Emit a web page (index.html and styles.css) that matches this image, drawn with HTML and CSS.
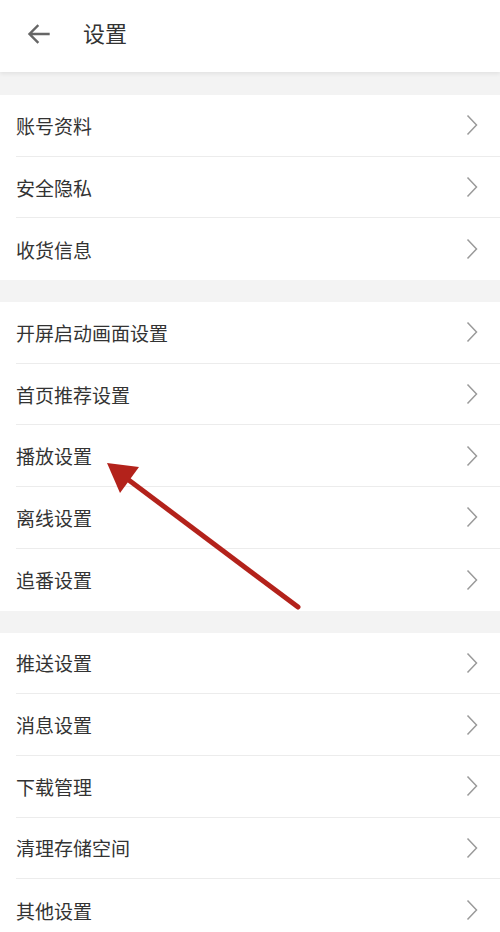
FILE: index.html
```html
<!DOCTYPE html>
<html lang="zh-CN">
<head>
<meta charset="utf-8">
<title>设置</title>
<link rel="stylesheet" href="styles.css">
</head>
<body>
<div class="page">
  <header class="topbar">
    <svg class="back" viewBox="0 0 24 24" width="24" height="24"><path d="M22.5 12H4M11.5 4L3.5 12 11.5 20" fill="none" stroke="#666" stroke-width="2.4" stroke-linecap="square"/></svg>
    <h1 class="title">设置</h1>
  </header>

  <ul class="group first">
    <li class="row"><span>账号资料</span><svg class="chev" viewBox="0 0 12 22" width="12" height="22"><path d="M1.5 1.5L10.5 11 1.5 20.5" fill="none" stroke="#9a9a9a" stroke-width="1.5"/></svg></li>
    <li class="row"><span>安全隐私</span><svg class="chev" viewBox="0 0 12 22" width="12" height="22"><path d="M1.5 1.5L10.5 11 1.5 20.5" fill="none" stroke="#9a9a9a" stroke-width="1.5"/></svg></li>
    <li class="row"><span>收货信息</span><svg class="chev" viewBox="0 0 12 22" width="12" height="22"><path d="M1.5 1.5L10.5 11 1.5 20.5" fill="none" stroke="#9a9a9a" stroke-width="1.5"/></svg></li>
  </ul>

  <ul class="group">
    <li class="row"><span>开屏启动画面设置</span><svg class="chev" viewBox="0 0 12 22" width="12" height="22"><path d="M1.5 1.5L10.5 11 1.5 20.5" fill="none" stroke="#9a9a9a" stroke-width="1.5"/></svg></li>
    <li class="row"><span>首页推荐设置</span><svg class="chev" viewBox="0 0 12 22" width="12" height="22"><path d="M1.5 1.5L10.5 11 1.5 20.5" fill="none" stroke="#9a9a9a" stroke-width="1.5"/></svg></li>
    <li class="row"><span>播放设置</span><svg class="chev" viewBox="0 0 12 22" width="12" height="22"><path d="M1.5 1.5L10.5 11 1.5 20.5" fill="none" stroke="#9a9a9a" stroke-width="1.5"/></svg></li>
    <li class="row"><span>离线设置</span><svg class="chev" viewBox="0 0 12 22" width="12" height="22"><path d="M1.5 1.5L10.5 11 1.5 20.5" fill="none" stroke="#9a9a9a" stroke-width="1.5"/></svg></li>
    <li class="row"><span>追番设置</span><svg class="chev" viewBox="0 0 12 22" width="12" height="22"><path d="M1.5 1.5L10.5 11 1.5 20.5" fill="none" stroke="#9a9a9a" stroke-width="1.5"/></svg></li>
  </ul>

  <ul class="group">
    <li class="row"><span>推送设置</span><svg class="chev" viewBox="0 0 12 22" width="12" height="22"><path d="M1.5 1.5L10.5 11 1.5 20.5" fill="none" stroke="#9a9a9a" stroke-width="1.5"/></svg></li>
    <li class="row"><span>消息设置</span><svg class="chev" viewBox="0 0 12 22" width="12" height="22"><path d="M1.5 1.5L10.5 11 1.5 20.5" fill="none" stroke="#9a9a9a" stroke-width="1.5"/></svg></li>
    <li class="row"><span>下载管理</span><svg class="chev" viewBox="0 0 12 22" width="12" height="22"><path d="M1.5 1.5L10.5 11 1.5 20.5" fill="none" stroke="#9a9a9a" stroke-width="1.5"/></svg></li>
    <li class="row"><span>清理存储空间</span><svg class="chev" viewBox="0 0 12 22" width="12" height="22"><path d="M1.5 1.5L10.5 11 1.5 20.5" fill="none" stroke="#9a9a9a" stroke-width="1.5"/></svg></li>
    <li class="row"><span>其他设置</span><svg class="chev" viewBox="0 0 12 22" width="12" height="22"><path d="M1.5 1.5L10.5 11 1.5 20.5" fill="none" stroke="#9a9a9a" stroke-width="1.5"/></svg></li>
  </ul>

  <svg class="annot" viewBox="0 0 500 932" width="500" height="932">
    <line x1="298" y1="607" x2="118" y2="472" stroke="#b3221b" stroke-width="5" stroke-linecap="round"/>
    <polygon points="107,463 139,467 120,493" fill="#b3221b"/>
  </svg>
</div>
</body>
</html>
```

FILE: styles.css
```css
* { box-sizing: border-box; }
html, body { margin: 0; padding: 0; }
body {
  width: 500px;
  height: 932px;
  overflow: hidden;
  background: #f3f3f3;
  font-family: "Noto Sans CJK SC", "Noto Sans", sans-serif;
  color: #333;
}
.page { position: relative; width: 500px; height: 932px; }
.topbar {
  height: 72px;
  background: #fff;
  display: flex;
  align-items: center;
  padding-left: 26px;
  box-shadow: 0 2px 4px rgba(0,0,0,0.07);
  position: relative;
  z-index: 1;
}
.back { display: block; margin-top: -5px; }
.title {
  margin: -8px 0 0 33px;
  font-size: 22px;
  line-height: 30px;
  font-weight: 400;
  color: #333;
}
.group {
  list-style: none;
  margin: 22px 0 0;
  padding: 0 0 0 16px;
  background: #fff;
}
.group.first { margin-top: 23px; }
.row {
  height: 61.7px;
  display: flex;
  align-items: center;
  justify-content: space-between;
  border-bottom: 1px solid #ececec;
  font-size: 19px;
  color: #333;
  padding-right: 22px;
}
.row:last-child { border-bottom: none; }
.chev { display: block; }
.annot {
  position: absolute;
  left: 0;
  top: 0;
  pointer-events: none;
  z-index: 2;
}
```
